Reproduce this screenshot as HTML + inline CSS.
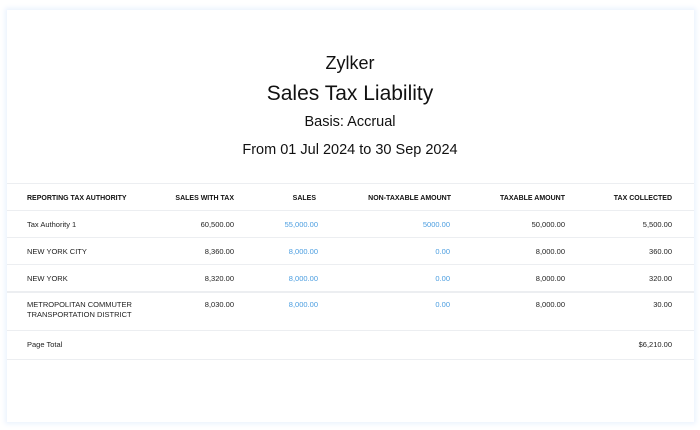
<!DOCTYPE html>
<html><head><style>
body{margin:0;width:700px;height:430px;background:#fff;font-family:"Liberation Sans",sans-serif;position:relative;overflow:hidden}
.card{position:absolute;left:7px;top:10px;width:687px;height:412px;background:#fff;box-shadow:0 0 5px 2px #eaf2fd}
.t{position:absolute;left:0;width:700px;text-align:center;color:#111}
.l{position:absolute;left:7px;width:687px;height:1px;background:#eceef1}
.c{position:absolute;font-size:7.5px;color:#222;white-space:nowrap}
.h{font-weight:bold;font-size:7px;color:#111}
.r{text-align:right;transform:translateX(-100%)}
.b{color:#4a9de0}
</style></head><body>
<div class="card"></div>
<div class="t" style="top:53px;font-size:18px">Zylker</div>
<div class="t" style="top:82px;font-size:21px">Sales Tax Liability</div>
<div class="t" style="top:114px;font-size:14.5px">Basis: Accrual</div>
<div class="t" style="top:142px;font-size:14.5px">From 01 Jul 2024 to 30 Sep 2024</div>
<div class="l" style="top:183px"></div>
<div class="l" style="top:210px"></div>
<div class="l" style="top:237px"></div>
<div class="l" style="top:264px"></div>
<div class="l" style="top:291px;height:2px"></div>
<div class="l" style="top:330px"></div>
<div class="l" style="top:359px"></div>
<div class="c h" style="left:27px;top:195px">REPORTING TAX AUTHORITY</div>
<div class="c h r" style="left:234px;top:195px">SALES WITH TAX</div>
<div class="c h r" style="left:316px;top:195px">SALES</div>
<div class="c h r" style="left:451px;top:195px">NON-TAXABLE AMOUNT</div>
<div class="c h r" style="left:565px;top:195px">TAXABLE AMOUNT</div>
<div class="c h r" style="left:672px;top:195px">TAX COLLECTED</div>

<div class="c" style="left:27px;top:220px">Tax Authority 1</div>
<div class="c r" style="left:234px;top:220px">60,500.00</div>
<div class="c r b" style="left:318px;top:220px">55,000.00</div>
<div class="c r b" style="left:450px;top:220px">5000.00</div>
<div class="c r" style="left:565px;top:220px">50,000.00</div>
<div class="c r" style="left:672px;top:220px">5,500.00</div>

<div class="c" style="left:27px;top:247px">NEW YORK CITY</div>
<div class="c r" style="left:234px;top:247px">8,360.00</div>
<div class="c r b" style="left:318px;top:247px">8,000.00</div>
<div class="c r b" style="left:450px;top:247px">0.00</div>
<div class="c r" style="left:565px;top:247px">8,000.00</div>
<div class="c r" style="left:672px;top:247px">360.00</div>

<div class="c" style="left:27px;top:274px">NEW YORK</div>
<div class="c r" style="left:234px;top:274px">8,320.00</div>
<div class="c r b" style="left:318px;top:274px">8,000.00</div>
<div class="c r b" style="left:450px;top:274px">0.00</div>
<div class="c r" style="left:565px;top:274px">8,000.00</div>
<div class="c r" style="left:672px;top:274px">320.00</div>

<div class="c" style="left:27px;top:300px;line-height:9.5px">METROPOLITAN COMMUTER<br>TRANSPORTATION DISTRICT</div>
<div class="c r" style="left:234px;top:300px">8,030.00</div>
<div class="c r b" style="left:318px;top:300px">8,000.00</div>
<div class="c r b" style="left:450px;top:300px">0.00</div>
<div class="c r" style="left:565px;top:300px">8,000.00</div>
<div class="c r" style="left:672px;top:300px">30.00</div>

<div class="c" style="left:27px;top:340px">Page Total</div>
<div class="c r" style="left:672px;top:340px">$6,210.00</div>
</body></html>
